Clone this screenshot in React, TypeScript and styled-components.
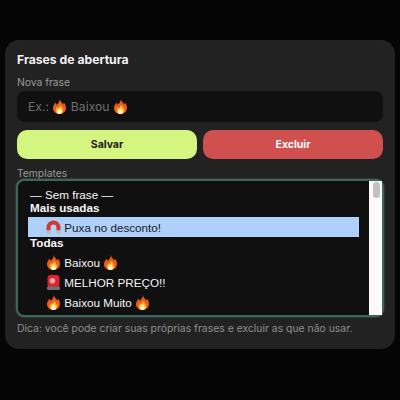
import React from 'react';
import styled, { createGlobalStyle } from 'styled-components';

const GlobalStyle = createGlobalStyle`
  html, body {
    margin: 0;
    padding: 0;
    background: #050505;
    font-family: Inter, "Liberation Sans", sans-serif;
  }
`;

const Page = styled.div`
  width: 400px;
  height: 400px;
  box-sizing: border-box;
  padding: 40px 5px 0;
`;

const Card = styled.section`
  height: 309px;
  box-sizing: border-box;
  padding: 12px 12px 0;
  background: #222222;
  border-radius: 14px;
  display: flex;
  flex-direction: column;
`;

const Title = styled.h2`
  margin: 0 0 7px;
  height: 16px;
  line-height: 16px;
  font-size: 12.2px;
  font-weight: 700;
  color: #f2f2f2;
`;

const Label = styled.div`
  height: 14px;
  line-height: 14px;
  font-size: 10.3px;
  color: #9a9a9a;
`;

const PhraseField = styled.div`
  height: 31px;
  margin-top: 2px;
  padding: 0 11px;
  display: flex;
  align-items: center;
  white-space: pre;
  background: #101010;
  border-radius: 8px;
  font-size: 12.2px;
  color: #6f6f6f;
`;

const Actions = styled.div`
  display: grid;
  grid-template-columns: 1fr 1fr;
  gap: 6px;
  margin-top: 8px;
`;

const ActionButton = styled.button<{ $danger?: boolean }>`
  height: 29px;
  padding: 0;
  border: 0;
  border-radius: 10px;
  font-family: inherit;
  font-size: 10.5px;
  font-weight: 700;
  background: ${({ $danger }) => ($danger ? '#d05050' : '#d4f580')};
  color: ${({ $danger }) => ($danger ? '#ffffff' : '#1a1a1a')};
`;

const TemplatesLabel = styled(Label)`
  margin-top: 7px;
  margin-bottom: -1px;
`;

const SelectBox = styled.div`
  height: 138px;
  margin: 0 -1px;
  box-sizing: border-box;
  border: 2px solid #3f665c;
  border-radius: 8px;
  box-shadow: 0 0 0 1px rgba(63, 102, 92, 0.35);
  background: #101010;
  display: flex;
  font-family: "Liberation Sans", Arial, sans-serif;
  font-size: 11.7px;
  color: #f5f5f5;
`;

const OptionList = styled.div`
  flex: 1;
  padding: 6px 10px 0 10px;
`;

const Option = styled.div<{ $selected?: boolean; $plain?: boolean }>`
  height: ${({ $plain }) => ($plain ? '14px' : '20px')};
  display: flex;
  align-items: center;
  white-space: pre;
  padding-left: ${({ $plain }) => ($plain ? '2px' : '18px')};
  background: ${({ $selected }) => ($selected ? '#aed0fb' : 'transparent')};
  color: ${({ $selected }) => ($selected ? '#1b1b1f' : '#f5f5f5')};
`;

const GroupName = styled.div`
  height: 14px;
  line-height: 14px;
  padding-left: 2px;
  font-weight: 700;
  color: #f7f7f7;
`;

const Group = styled.div`
  margin-bottom: -1px;
`;

const GroupRows = styled.div`
  padding-top: 2px;
`;

const ScrollTrack = styled.div`
  width: 13px;
  flex: none;
  background: #fafafa;
  padding: 1px 2px 1px 4px;
  box-sizing: border-box;
`;

const ScrollThumb = styled.div`
  height: 16px;
  border-radius: 4px;
  background: #c2c2c2;
`;

const Hint = styled.p`
  margin: 5px 0 0;
  height: 14px;
  line-height: 14px;
  font-size: 10.4px;
  color: #8f8f8f;
  white-space: nowrap;
`;

const Fire = () => (
  <svg width="15" height="15" viewBox="-1 0 15 15">
    <path d="M6.8 0C7.4 2.6 9 3.6 10.4 5.4C10.7 4.8 10.8 4.3 10.7 3.6C12.3 5.2 13 7 13 9C13 12.4 10.2 15 6.5 15C2.8 15 0 12.5 0 9.2C0 6.6 1.6 5.2 2.6 3.4C3 4.3 3.2 5 3.3 5.8C5.3 4.6 6.9 2.6 6.8 0Z" fill="#ee5a1c" />
    <path d="M6.9 5.2C7.2 6.8 10.3 8.2 10.3 11C10.3 13.3 8.7 15 6.5 15C4.3 15 2.7 13.4 2.7 11.2C2.7 9.6 3.6 8.6 4.2 7.8C4.5 8.3 4.7 8.8 4.8 9.3C6 8.3 6.9 7 6.9 5.2Z" fill="#fbb11f" />
    <path d="M6.6 8.6C6.9 10 9 11 9 12.8C9 14.2 7.9 15 6.5 15C5.1 15 4 14.2 4 12.9C4 11.2 6.2 10.4 6.6 8.6Z" fill="#fff1c4" />
  </svg>
);

const Magnet = () => (
  <svg width="15" height="15" viewBox="0 0 15 15">
    <path d="M0.5 10.5V7.5a7 7 0 0 1 14 0V10.5H10.4V7.5a2.9 2.9 0 0 0-5.8 0V10.5Z" fill="#d03a2e" />
    <path d="M0.5 10.5h4.1v3.5H0.5ZM10.4 10.5h4.1v3.5h-4.1Z" fill="#b9bcc2" />
  </svg>
);

const Siren = () => (
  <svg width="15" height="15" viewBox="-1 0 15 15">
    <rect x="0.5" y="0" width="12" height="12.5" rx="3" fill="#d9232e" />
    <circle cx="5.5" cy="5.8" r="2.8" fill="#ff9da1" />
    <rect x="0" y="11.5" width="13" height="3.5" rx="1.2" fill="#6d6f75" />
  </svg>
);

const App = () => {
  return (
    <Page>
      <GlobalStyle />
      <Card>
        <Title>Frases de abertura</Title>
        <Label>Nova frase</Label>
        <PhraseField>
          Ex.: <Fire /> Baixou <Fire />
        </PhraseField>
        <Actions>
          <ActionButton>Salvar</ActionButton>
          <ActionButton $danger>Excluir</ActionButton>
        </Actions>
        <TemplatesLabel>Templates</TemplatesLabel>
        <SelectBox>
          <OptionList>
            <Option $plain>— Sem frase —</Option>
            <Group>
              <GroupName>Mais usadas</GroupName>
              <GroupRows>
                <Option $selected>
                  <Magnet /> Puxa no desconto!
                </Option>
              </GroupRows>
            </Group>
            <Group>
              <GroupName>Todas</GroupName>
              <GroupRows>
                <Option>
                  <Fire /> Baixou <Fire />
                </Option>
                <Option>
                  <Siren /> MELHOR PREÇO!!
                </Option>
                <Option>
                  <Fire /> Baixou Muito <Fire />
                </Option>
              </GroupRows>
            </Group>
          </OptionList>
          <ScrollTrack>
            <ScrollThumb />
          </ScrollTrack>
        </SelectBox>
        <Hint>Dica: você pode criar suas próprias frases e excluir as que não usar.</Hint>
      </Card>
    </Page>
  );
};

export default App;
